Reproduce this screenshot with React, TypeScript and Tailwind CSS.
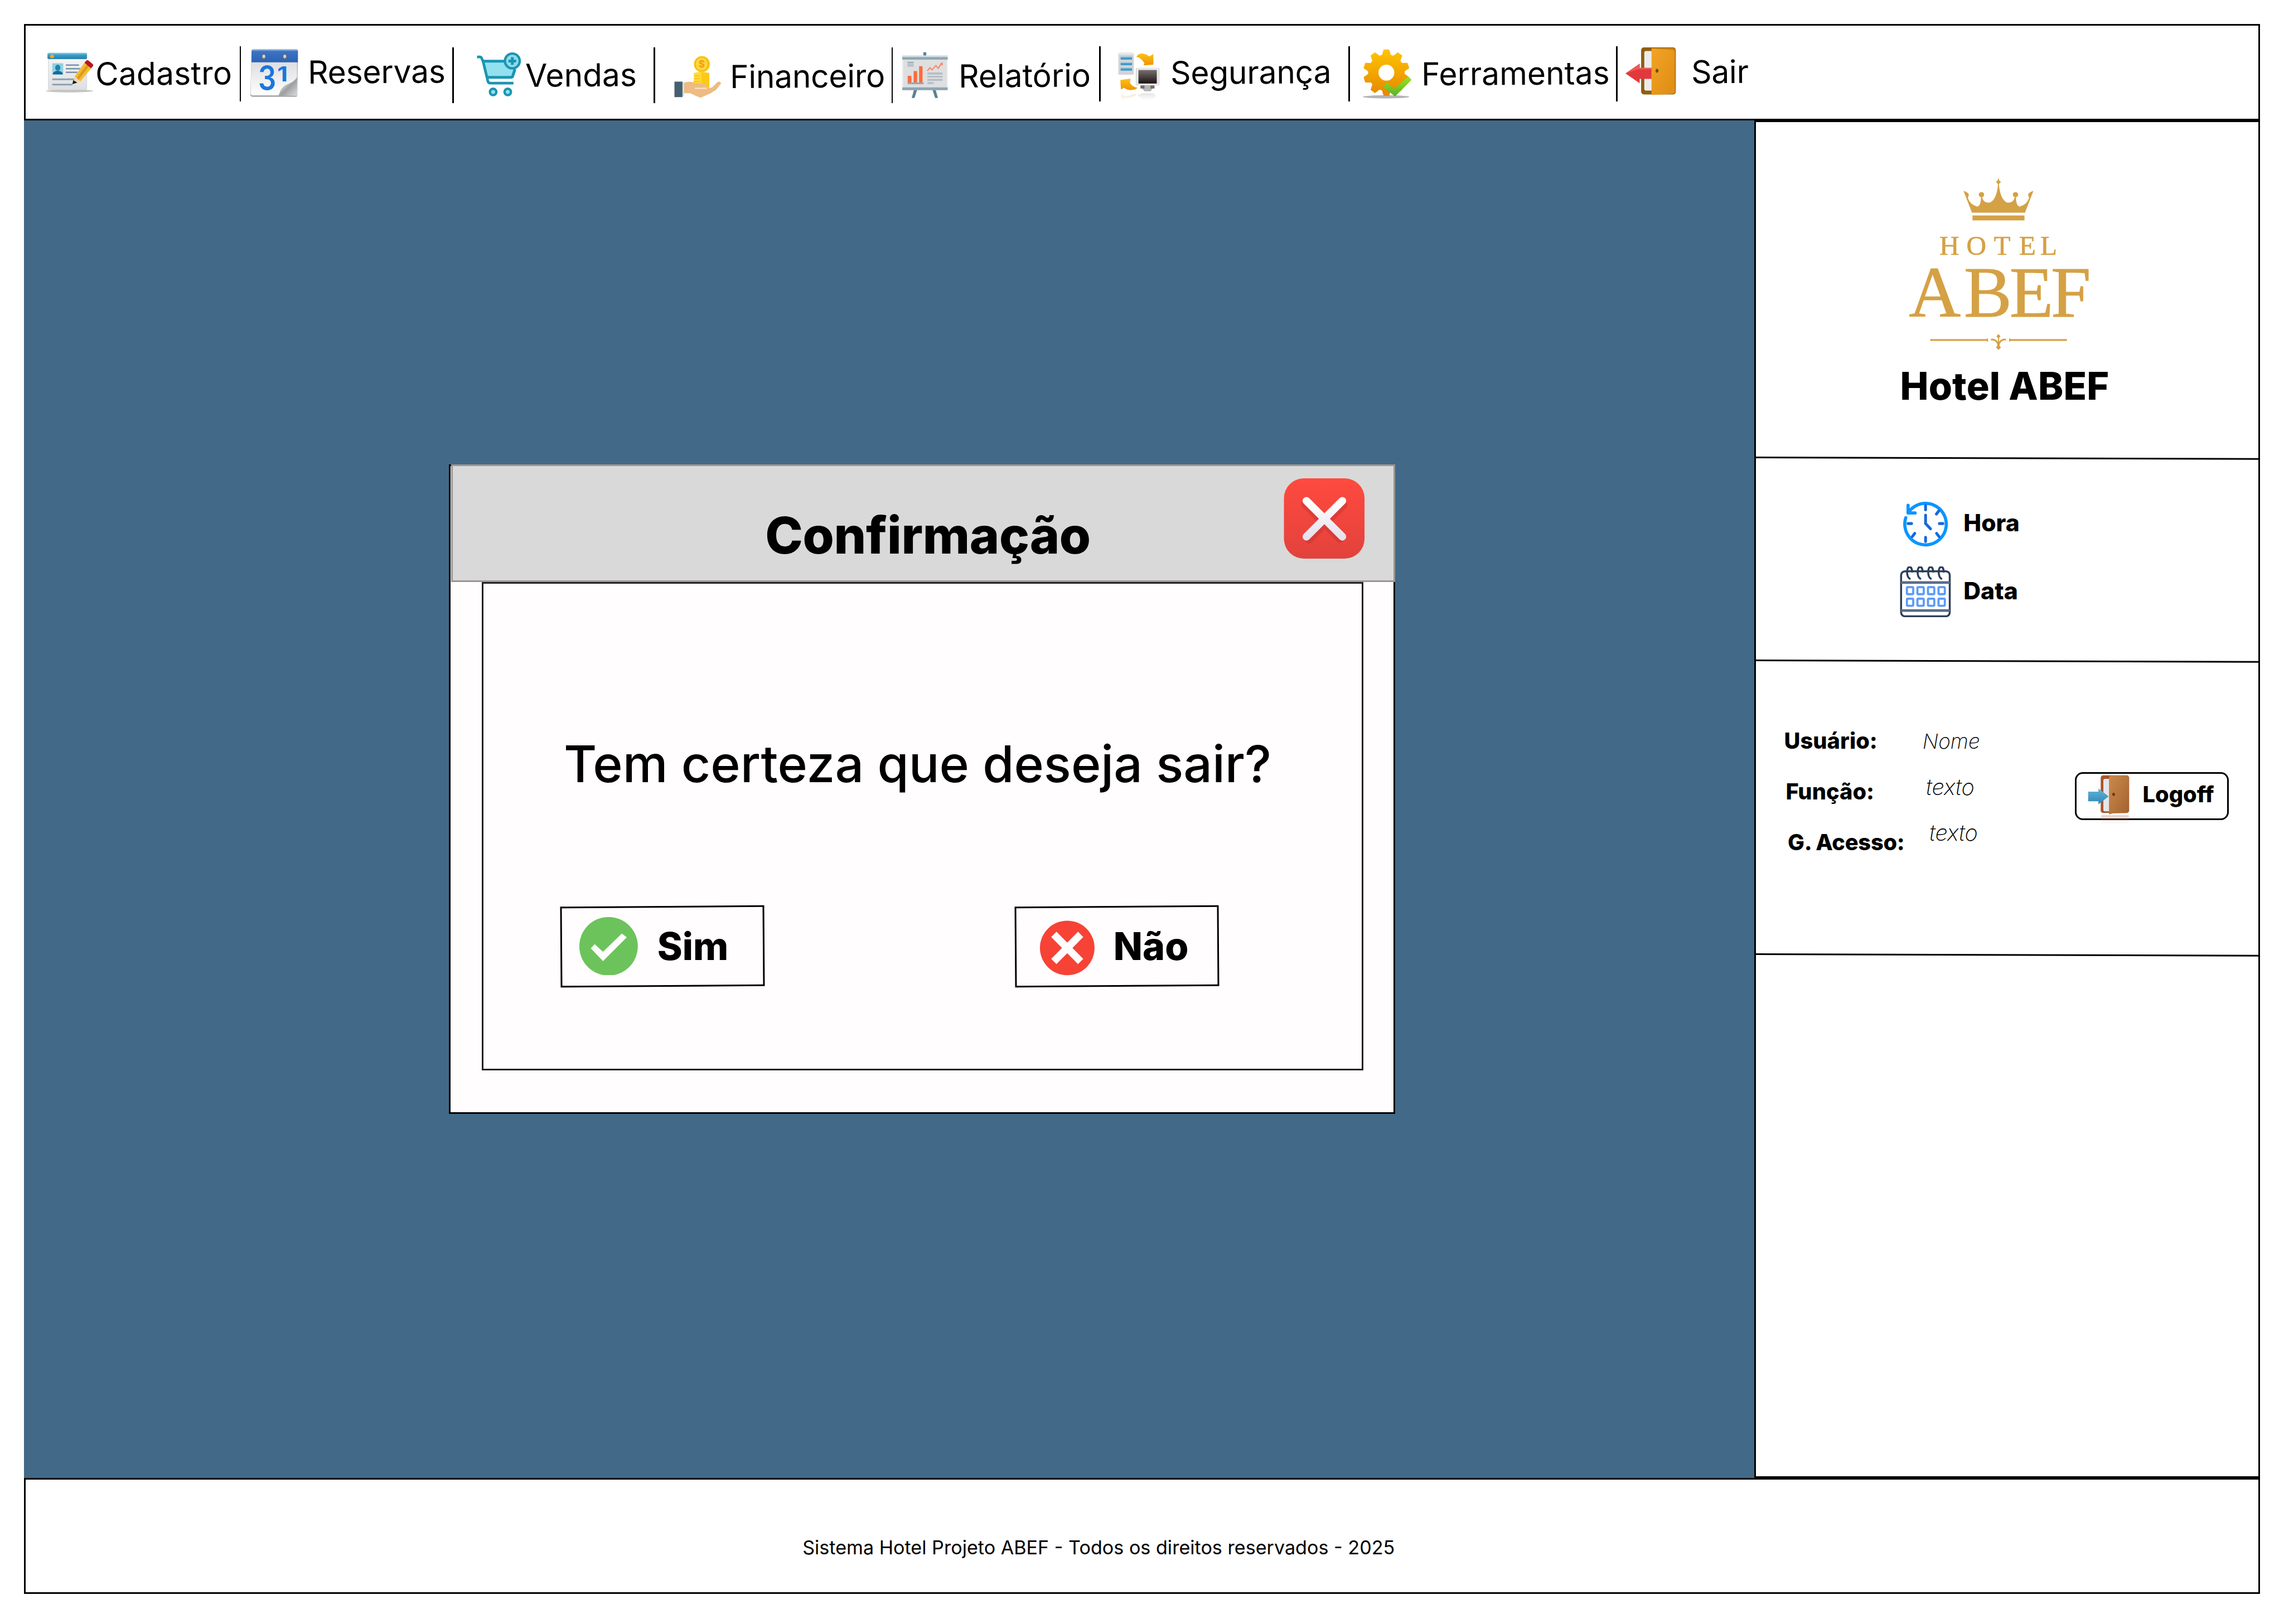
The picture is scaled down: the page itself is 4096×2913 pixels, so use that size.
import type { ReactNode } from "react";

type IconProps = { className: string };

function CadastroIcon({ className }: IconProps) {
  return (
    <svg className={className} viewBox="104 205 167 235" preserveAspectRatio="none">
      <defs>
        <linearGradient id="cad-bar" x1="0" y1="0" x2="0" y2="1">
          <stop offset="0" stopColor="#8fd6ee" />
          <stop offset=".35" stopColor="#3e9cc4" />
          <stop offset="1" stopColor="#2580ad" />
        </linearGradient>
        <linearGradient id="cad-page" x1="0" y1="0" x2="0" y2="1">
          <stop offset="0" stopColor="#f7f7f7" />
          <stop offset="1" stopColor="#dedfe0" />
        </linearGradient>
      </defs>
      <ellipse cx="187" cy="427" rx="83" ry="8" fill="#c4c4c4" />
      <rect x="113" y="212" width="134" height="208" rx="5" fill="url(#cad-page)" stroke="#d4d6d8" strokeWidth="2" />
      <rect x="110" y="210" width="138" height="36" rx="7" fill="url(#cad-bar)" />
      <ellipse cx="126" cy="231" rx="7" ry="10" fill="#f2a916" />
      <rect x="127" y="270" width="38" height="64" fill="#8fd0e0" />
      <ellipse cx="146" cy="295" rx="9" ry="17" fill="#1f83ad" />
      <path d="M129 333v-8q7-12 17-12t17 12v8z" fill="#126c98" />
      <path d="M174 280h46M174 301h50M174 321h40" stroke="#7690ac" strokeWidth="8" />
      <path d="M127 361h78M127 391h70" stroke="#8ba0b4" strokeWidth="10" />
      <path d="M205 345l34-78 23 32-37 74z" fill="#f4bb35" />
      <path d="M212 353l35-75 7 10-36 76z" fill="#e09a1c" />
      <path d="M239 267l7-13q4-3 8 2l14 19q3 5 1 10l-7 14z" fill="#b8161b" />
      <path d="M205 345l20 28-27 16z" fill="#f1d6ae" />
      <path d="M200 366l14 14-17 9z" fill="#1c1c1c" />
    </svg>
  );
}

function ReservasIcon({ className }: IconProps) {
  return (
    <svg className={className} viewBox="816 184 170 278" preserveAspectRatio="none">
      <defs>
        <linearGradient id="res-top" x1="0" y1="0" x2="0" y2="1">
          <stop offset="0" stopColor="#c9daf0" />
          <stop offset=".18" stopColor="#3b74c4" />
          <stop offset="1" stopColor="#2d62b4" />
        </linearGradient>
        <linearGradient id="res-page" x1="0" y1="0" x2="0" y2="1">
          <stop offset="0" stopColor="#d2d3d6" />
          <stop offset=".4" stopColor="#e4e4e7" />
          <stop offset="1" stopColor="#ffffff" />
        </linearGradient>
        <linearGradient id="res-curl" x1="0" y1="0" x2="1" y2="1">
          <stop offset="0.2" stopColor="#fafafa" />
          <stop offset=".55" stopColor="#9c9ea0" />
          <stop offset="1" stopColor="#dcdddf" />
        </linearGradient>
      </defs>
      <path d="M822 196l-4 250q0 12 8 12h150q6 0 6-10l2-250z" fill="#a6a8ab" />
      <path d="M822 196l-3 244q1 10 8 10h150l4-12V196z" fill="url(#res-page)" />
      <path d="M822 262v-64q0-12 8-12h146q8 0 8 12v64z" fill="url(#res-top)" />
      <ellipse cx="864" cy="231" rx="8" ry="16" fill="#5f6b7c" />
      <ellipse cx="865" cy="229" rx="5" ry="10" fill="#d7d2c6" />
      <ellipse cx="938" cy="231" rx="8" ry="16" fill="#5f6b7c" />
      <ellipse cx="938" cy="229" rx="5" ry="10" fill="#d7d2c6" />
      <text transform="translate(845 417) scale(.53 1)" fontFamily="Inter, sans-serif" fontWeight="600" fontSize="186" fill="#1b76dc">3</text>
      <text transform="translate(912 370) scale(.72 1)" fontFamily="Inter, sans-serif" fontWeight="700" fontSize="118" fill="#1b76dc">1</text>
      <path d="M981 345q-8 25-30 40-26 14-32 55l-4 12h66z" fill="url(#res-curl)" />
    </svg>
  );
}

function VendasIcon({ className }: IconProps) {
  return (
    <svg className={className} viewBox="0 0 254 257" fill="none">
      <path d="M38 53h118l56 52-10 38H63z" fill="#93e0ef" />
      <path d="M9 29h8q8 0 11 8l8 18 27 112q3 11 14 11h124" stroke="#1a95b2" strokeWidth="15" strokeLinecap="square" />
      <path d="M36 53h122M56 145h137q10 0 12-9l12-38" stroke="#1a95b2" strokeWidth="16" />
      <circle cx="202" cy="52" r="42" fill="#8edcec" stroke="#1a95b2" strokeWidth="14" />
      <path d="M202 30v44M180 52h44" stroke="#1a95b2" strokeWidth="16" />
      <circle cx="93" cy="228" r="18" fill="#93e0ef" stroke="#1a95b2" strokeWidth="14" />
      <circle cx="176" cy="228" r="18" fill="#93e0ef" stroke="#1a95b2" strokeWidth="14" />
    </svg>
  );
}

function FinanceiroIcon({ className }: IconProps) {
  return (
    <svg className={className} viewBox="784 130 164 250" preserveAspectRatio="none">
      <path d="M853 234q26-10 54 0v84h-50l-6-30q6-26 2-54z" fill="#fdc916" />
      <path d="M853 234q12-6 26-6v64h-26z" fill="#ffdc3a" />
      <path d="M853 250h22M853 266h22M853 282h22" stroke="#f6b414" strokeWidth="4" />
      <ellipse cx="881" cy="184" rx="28" ry="46" fill="#fdc513" />
      <ellipse cx="880" cy="184" rx="22" ry="37" fill="#ffd93e" stroke="#f7b519" strokeWidth="3" />
      <text transform="translate(880 204) scale(.62 1)" textAnchor="middle" fontFamily="Inter, sans-serif" fontWeight="700" fontSize="56" fill="#f39a12">$</text>
      <path d="M818 290Q838 276 856 290Q870 298 884 292Q897 294 898 314L908 320Q914 320 920 310L936 284Q946 280 948 294L930 330L912 348Q896 362 876 374Q860 366 842 350L818 348Z" fill="#eebb82" />
      <path d="M856 321h42" stroke="#fbe3c4" strokeWidth="7" />
      <path d="M812 286h7v78h-7z" fill="#cfe0ea" />
      <path d="M785 283h28v88h-28z" fill="#46606f" />
    </svg>
  );
}

function RelatorioIcon({ className }: IconProps) {
  return (
    <svg className={className} viewBox="44 114 166 266" preserveAspectRatio="none">
      <path d="M122 116h10v26h-10zM89 330h11l-9 46h-10zM154 330h11l8 46h-10z" fill="#5d7f93" />
      <rect x="49" y="150" width="157" height="172" fill="#dedfe1" stroke="#eff0f1" strokeWidth="4" />
      <rect x="48" y="134" width="159" height="14" fill="#cfdde3" />
      <rect x="48" y="144" width="159" height="14" fill="#8fa6b2" />
      <rect x="48" y="316" width="159" height="16" fill="#8fa6b2" />
      <path d="M66 170h22v9H66zM66 183h22v5H66zM66 192h22v5H66z" fill="#9fb0ba" />
      <path d="M67 250h13v40H67zM88 223h12v67H88zM107 196h12v94h-12z" fill="#ff6a3a" />
      <path d="M67 288h56v10H67z" fill="#94a8b4" />
      <path d="M136 222l9-18 7 12 14-24 8 16 12-30" fill="none" stroke="#f98a68" strokeWidth="5" />
      <path d="M180 182l9-10 1 22z" fill="#f98a68" />
      <path d="M136 231h53v12h-53zM136 250h53v10h-53zM136 268h53v11h-53zM136 286h22v11h-22z" fill="#b4bfc6" />
    </svg>
  );
}

function SegurancaIcon({ className }: IconProps) {
  return (
    <svg className={className} viewBox="800 114 148 292" preserveAspectRatio="none">
      <defs>
        <linearGradient id="seg-arrow" x1="0" y1="0" x2="0" y2="1">
          <stop offset="0" stopColor="#ffc014" />
          <stop offset="1" stopColor="#ec9406" />
        </linearGradient>
        <linearGradient id="seg-screen" x1="0" y1="0" x2="0" y2="1">
          <stop offset="0" stopColor="#777070" />
          <stop offset="1" stopColor="#1d1212" />
        </linearGradient>
        <linearGradient id="seg-fade" x1="0" y1="0" x2="0" y2="1">
          <stop offset="0" stopColor="#f0cf8c" stopOpacity=".6" />
          <stop offset="1" stopColor="#eeeeee" stopOpacity="0" />
        </linearGradient>
        <linearGradient id="seg-fade-gray" x1="0" y1="0" x2="0" y2="1">
          <stop offset="0" stopColor="#cfcfcf" stopOpacity=".6" />
          <stop offset="1" stopColor="#eeeeee" stopOpacity="0" />
        </linearGradient>
      </defs>
      <path d="M803 120q28-6 54 0v122q-27 6-54 0z" fill="#d3d4d6" />
      <path d="M803 120q28-6 54 0v10h-54z" fill="#e9e9ea" />
      <path d="M811 142h40v16h-40zM811 174h40v16h-40zM811 205h40v16h-40z" fill="#3f9ccb" />
      <path d="M811 142h40v4h-40zM811 174h40v4h-40zM811 205h40v4h-40z" fill="#8cc6e2" />
      <path d="M866 142Q874 118 893 125Q904 130 911 140L925 126V187L891 191L894 178Q886 160 878 150Z" fill="url(#seg-arrow)" />
      <rect x="865" y="206" width="80" height="98" rx="5" fill="#ebebeb" stroke="#c9c9c9" strokeWidth="2" />
      <rect x="873" y="217" width="64" height="77" fill="url(#seg-screen)" />
      <path d="M882 304h46l-6 18-6 16h-22l-8-16z" fill="#b5b5b5" />
      <path d="M880 306h14v16h-14zM915 306h14v16h-14z" fill="#6c6c6c" />
      <path d="M810 274L846 266L843 288Q850 312 870 318Q862 332 842 331Q830 328 823 318L812 328Z" fill="url(#seg-arrow)" />
      <path d="M812 398l2-40 14 8q20-4 38-16-4 22-20 24l-18 8z" fill="url(#seg-fade)" />
      <path d="M868 360l18-10h38l10 12-6 18-14 16h-16l-14-16z" fill="url(#seg-fade-gray)" />
    </svg>
  );
}

const gearPath = (() => {
  const pts: string[] = [];
  for (let i = 0; i < 10; i++) {
    for (const [da, r] of [[-13, 101], [-6, 129], [6, 129], [13, 101]]) {
      const a = ((i * 36 + da - 90) * Math.PI) / 180;
      pts.push(`${(140 + r * Math.cos(a)).toFixed(1)} ${(137 + r * Math.sin(a)).toFixed(1)}`);
    }
  }
  return `M${pts.join("L")}ZM188 137a48 48 0 1 0 -96 0a48 48 0 1 0 96 0Z`;
})();

function FerramentasIcon({ className }: IconProps) {
  return (
    <svg className={className} viewBox="0 0 286 286">
      <defs>
        <linearGradient id="fer-gear" x1="0" y1="0" x2="0" y2="1">
          <stop offset="0" stopColor="#ffc400" />
          <stop offset="1" stopColor="#e58700" />
        </linearGradient>
        <linearGradient id="fer-check" x1="0" y1="0" x2="0" y2="1">
          <stop offset="0" stopColor="#9be31f" />
          <stop offset="1" stopColor="#5bb02a" />
        </linearGradient>
      </defs>
      <ellipse cx="138" cy="274" rx="132" ry="9" fill="#b4b4b4" />
      <path d={gearPath} fillRule="evenodd" fill="url(#fer-gear)" stroke="url(#fer-gear)" strokeWidth="6" strokeLinejoin="round" />
      <path d="M121 218l24-25 36 36 83-70 19 19-94 94z" fill="url(#fer-check)" />
    </svg>
  );
}

function SairIcon({ className }: IconProps) {
  return (
    <svg className={className} viewBox="1046 86 178 276" preserveAspectRatio="none">
      <defs>
        <linearGradient id="sair-door" x1="0" y1="0" x2="1" y2="1">
          <stop offset="0" stopColor="#f2a424" />
          <stop offset="1" stopColor="#de8c14" />
        </linearGradient>
      </defs>
      <rect x="1102" y="89" width="120" height="267" rx="10" ry="16" fill="#8f5e10" />
      <rect x="1113" y="110" width="32" height="224" rx="6" ry="10" fill="#ececec" />
      <path d="M1138 95l70-2q13 2 13 16v226q0 14-10 18l-73 6z" fill="url(#sair-door)" />
      <path d="M1138 95l70 8q9 4 9 14v222l4-4V109q0-14-13-16z" fill="#b97a18" opacity=".7" />
      <ellipse cx="1157" cy="222" rx="5" ry="11" fill="#6b4a12" />
      <path d="M1048 237l49-55v23h41v63h-41v24z" fill="#e2393d" />
      <path d="M1048 237l49-55v23h41v8h-48z" fill="#ee5a56" />
    </svg>
  );
}

function HotelLogo({ className }: IconProps) {
  return (
    <svg className={className} viewBox="150 70 1030 1000" fill="#d5a145">
      <path d="M461 153Q478 158 489 168Q494 182 485 192Q497 232 540 243Q561 234 560 190H567Q574 222 609 220Q648 206 657 118H662Q671 206 710 220Q745 222 752 190H759Q758 234 779 243Q822 232 834 192Q825 182 830 168Q841 158 858 153L810 277H509Z" />
      <circle cx="563" cy="175" r="15" />
      <circle cx="756" cy="175" r="15" />
      <path d="M659.500 78Q662 98 675 103Q662 108 659.500 128Q657 108 644 103Q657 98 659.500 78Z" />
      <rect x="512" y="293" width="295" height="28" />
      <text x="324 478 633 776 897" y="516" fontFamily="'Liberation Serif', serif" fontSize="156" stroke="#d5a145" strokeWidth="2">HOTEL</text>
      <text x="151 463 722 957" y="868" fontFamily="'Liberation Serif', serif" fontSize="408" stroke="#d5a145" strokeWidth="3">ABEF</text>
      <path d="M272 995h318l10-6v22l-10-6H272zM1048 995H730l-10-6v22l10-6h318z" />
      <path d="M659.500 966l11 13-8 10v22q14-22 40-18v10q-18-4-28 8-10 10-9 20l8 12-14 13-14-13 8-12q1-10-9-20-10-12-28-8v-10q26-4 40 18v-22l-8-10z" />
    </svg>
  );
}

function ClockIcon({ className }: IconProps) {
  return (
    <svg className={className} viewBox="0 0 257 258" fill="none" strokeLinecap="round" strokeLinejoin="round">
      <path d="M15 97A118 118 0 1 0 29 68" stroke="#0a95ff" strokeWidth="18" />
      <path d="M28 26v44h40" stroke="#0a95ff" strokeWidth="18" />
      <path
        d="M127.500 28v24M127.500 208v24M28 130h20M206 130h20M203 58l-14 18M190 186l14 18M66 186l-14 18M127.500 82v48l28 30"
        stroke="#1668dc"
        strokeWidth="16"
      />
    </svg>
  );
}

function CalendarIcon({ className }: IconProps) {
  return (
    <svg className={className} viewBox="0 0 291 289" fill="none">
      <rect x="7" y="28" width="277" height="256" rx="22" stroke="#2c3d57" strokeWidth="11" />
      <path d="M6 92h279M6 251h279" stroke="#5b6b88" strokeWidth="15" />
      {[56, 116, 176, 236].map((x) => (
        <g key={x}>
          <path d={`M${x + 14} 30C${x + 12} -6 ${x - 14} -6 ${x - 15} 30C${x - 15} 52 ${x - 9} 64 ${x} 70`} stroke="#2c3d57" strokeWidth="11" strokeLinecap="round" />
          <rect x={x - 16} y="118" width="36" height="40" rx="5" stroke="#5c9bf6" strokeWidth="12" />
          <rect x={x - 16} y="184" width="36" height="40" rx="5" stroke="#5c9bf6" strokeWidth="12" />
        </g>
      ))}
    </svg>
  );
}

function LogoffIcon({ className }: IconProps) {
  return (
    <svg className={className} viewBox="1020 378 130 285" preserveAspectRatio="none">
      <defs>
        <linearGradient id="log-door" x1="0" y1="0" x2="1" y2="1">
          <stop offset="0" stopColor="#c98a4c" />
          <stop offset="1" stopColor="#a3622e" />
        </linearGradient>
        <linearGradient id="log-arrow" x1="0" y1="0" x2="0" y2="1">
          <stop offset="0" stopColor="#62b5da" />
          <stop offset="1" stopColor="#2f86b4" />
        </linearGradient>
        <linearGradient id="log-fade" x1="0" y1="0" x2="0" y2="1">
          <stop offset="0" stopColor="#c0714a" stopOpacity=".35" />
          <stop offset="1" stopColor="#e8c0b0" stopOpacity="0" />
        </linearGradient>
      </defs>
      <rect x="1061" y="380" width="86" height="214" rx="8" ry="14" fill="#a9542a" />
      <rect x="1069" y="400" width="22" height="184" rx="4" ry="8" fill="#e3e6ea" />
      <path d="M1086 392q2-10 8-10h44q8 2 8 14v184q0 12-8 14l-40 2-12 6z" fill="url(#log-door)" />
      <ellipse cx="1100" cy="488" rx="4" ry="9" fill="#6c3413" />
      <path d="M1023 473h31v-18l31 45-31 45v-18h-31z" fill="url(#log-arrow)" />
      <path d="M1062 606h84v54h-84z" fill="url(#log-fade)" />
    </svg>
  );
}

function CloseIcon({ className }: IconProps) {
  return (
    <svg className={className} viewBox="0 0 52 52">
      <defs>
        <linearGradient id="close-bg" x1="0" y1="0" x2="0" y2="1">
          <stop offset="0" stopColor="#ff4a3f" />
          <stop offset="1" stopColor="#e2423c" />
        </linearGradient>
        <linearGradient id="close-x" x1="0" y1="0" x2="0" y2="1">
          <stop offset="0" stopColor="#ffffff" />
          <stop offset="1" stopColor="#e6e1ee" />
        </linearGradient>
      </defs>
      <rect x=".8" y=".7" width="50.800" height="50.600" rx="12.500" fill="url(#close-bg)" />
      <g fill="none" strokeLinecap="round">
        <path d="M14 17l22 22M38.500 17.500l-22 22" stroke="#b92c2b" strokeWidth="4.800" opacity=".35" />
        <path d="M15 14.900l22.600 22.600M37.600 14.900L15 37.500" stroke="url(#close-x)" strokeWidth="4.900" />
      </g>
    </svg>
  );
}

function CheckBadge({ className }: IconProps) {
  return (
    <svg className={className} viewBox="0 0 331 331">
      <circle cx="165.500" cy="165.500" r="166" fill="#6cc35b" />
      <path d="M65 177l22-24 47 44L241 93l28 22L134 250z" fill="#fff" />
    </svg>
  );
}

function CrossBadge({ className }: IconProps) {
  return (
    <svg className={className} viewBox="0 0 316 312">
      <circle cx="158" cy="156" r="155" fill="#f64336" />
      <path d="M82 79l152 154M234 79L82 233" stroke="#fff" strokeWidth="42" />
    </svg>
  );
}

function MenuLabel({ className, children }: { className: string; children: ReactNode }) {
  return <span className={`${className} block shrink-0 -rotate-[0.4deg] text-xl leading-6 whitespace-nowrap`}>{children}</span>;
}

function Divider({ className }: IconProps) {
  return <span className={`${className} h-[35px] w-px shrink-0 bg-black`} />;
}

function DialogButton({ className, children }: { className: string; children: ReactNode }) {
  return (
    <button className={`${className} relative flex h-[51px] w-[128.8px] shrink-0 items-start text-2xl leading-[29px] font-extrabold`}>
      <span className="absolute inset-0 -rotate-[0.4deg] border-[1.06px] border-black" />
      {children}
    </button>
  );
}

export default function App() {
  return (
    <div className="h-[1024px] w-[1440px] overflow-hidden bg-white p-[15px] font-[Inter,sans-serif] text-black [zoom:2.84444]">
      <header className="h-[61px] w-[1410px] border-[1.06px] border-black">
        <nav className="flex items-start">
          <CadastroIcon className="mt-[16.8px] ml-[12.8px] h-[26.1px] w-[30.2px] shrink-0" />
          <MenuLabel className="mt-[18.5px] ml-px w-[91px] tracking-[0.08px]">Cadastro</MenuLabel>
          <Divider className="mt-[13px]" />
          <ReservasIcon className="mt-[14.4px] ml-[5.4px] h-[30.9px] w-[30.7px] shrink-0" />
          <MenuLabel className="mt-[17.3px] ml-[5.9px] w-[91px] tracking-[-0.06px]">Reservas</MenuLabel>
          <Divider className="mt-[14px]" />
          <VendasIcon className="mt-[16.8px] ml-[14.7px] h-[28.5px] w-[28.2px] shrink-0" />
          <MenuLabel className="mt-[19.3px] ml-[2.3px] w-[80.8px]">Vendas</MenuLabel>
          <Divider className="mt-[14px]" />
          <FinanceiroIcon className="mt-[18.4px] ml-[12px] h-[27.8px] w-[29.6px] shrink-0" />
          <MenuLabel className="mt-[20.3px] ml-[5.5px] w-[101.9px] tracking-[-0.09px]">Financeiro</MenuLabel>
          <Divider className="mt-[14px]" />
          <RelatorioIcon className="mt-[16.7px] ml-[5px] h-[29.5px] w-[29.9px] shrink-0" />
          <MenuLabel className="mt-[19.8px] ml-[6.3px] w-[88.8px]">Relatório</MenuLabel>
          <Divider className="mt-[13px]" />
          <SegurancaIcon className="mt-[16.7px] ml-[10.5px] h-[32.4px] w-[26.8px] shrink-0" />
          <MenuLabel className="mt-[17.6px] ml-[6.6px] w-[112.1px] tracking-[-0.07px]">Segurança</MenuLabel>
          <Divider className="mt-[13px]" />
          <FerramentasIcon className="mt-[14.7px] ml-[7.6px] h-[31.8px] w-[31.8px] shrink-0" />
          <MenuLabel className="mt-[18.4px] ml-[5.6px] w-[123px]">Ferramentas</MenuLabel>
          <Divider className="mt-[13px]" />
          <SairIcon className="mt-[13.6px] ml-[4.6px] h-[30.7px] w-[32.5px] shrink-0" />
          <MenuLabel className="mt-[17.3px] ml-[9.1px] w-[40px] tracking-[-0.08px]">Sair</MenuLabel>
        </nav>
      </header>

      <div className="flex h-[856px]">
        <main className="w-[1091px] bg-[#426988]">
          <section className="mt-[217px] ml-[268px] h-[409.3px] w-[596.7px] border-[1.06px] border-black bg-[#fffdfe]">
            <div className="-mt-[1.06px] -mr-[1.06px] ml-[0.4px] flex h-[74.2px] items-start border-[1.06px] border-[#9c9792] bg-[#d9d9d9]">
              <h1 className="mt-[24.2px] ml-[196.9px] w-[326.1px] text-[32px] leading-[39px] font-extrabold tracking-[-0.12px]">Confirmação</h1>
              <button className="mt-[6.9px]">
                <CloseIcon className="h-[52px] w-[52.2px]" />
              </button>
            </div>
            <div className="ml-[19.6px] h-[307.7px] w-[556px] border-[1.06px] border-[#232222]">
              <p className="mt-[93.9px] ml-[50.7px] text-[32px] leading-[39px] font-medium whitespace-nowrap">Tem certeza que deseja sair?</p>
              <div className="mt-[70.3px] flex items-start">
                <DialogButton className="ml-[48.7px]">
                  <CheckBadge className="mt-[6.8px] ml-[12px] size-[36.8px] shrink-0" />
                  <span className="mt-[10.7px] ml-[12.2px]">Sim</span>
                </DialogButton>
                <DialogButton className="ml-[157.5px]">
                  <CrossBadge className="mt-[9px] ml-[15.7px] h-[34.7px] w-[35.1px] shrink-0" />
                  <span className="mt-[10.7px] ml-[11.5px]">Não</span>
                </DialogButton>
              </div>
            </div>
          </section>
        </main>

        <aside className="w-[319px] border-[1.06px] border-black bg-white">
          <section className="flex h-[211px] flex-col items-start">
            <HotelLogo className="mt-[34.1px] ml-[96.3px] h-[111.1px] w-[114.4px] shrink-0 overflow-visible" />
            <h2 className="mt-[6.6px] ml-[90.9px] text-2xl leading-[29px] font-extrabold tracking-[0.05px] whitespace-nowrap">Hotel ABEF</h2>
          </section>
          <div className="h-px origin-left rotate-[0.18deg] bg-black" />
          <section className="flex h-[127px] flex-col items-start text-[15px] leading-[18px] font-extrabold">
            <div className="mt-[26.6px] ml-[92.7px] flex items-start">
              <ClockIcon className="h-[28.7px] w-[28.5px] overflow-visible" />
              <span className="mt-[5.1px] ml-[9.7px]">Hora</span>
            </div>
            <div className="mt-[12.7px] ml-[90.8px] flex items-start">
              <CalendarIcon className="h-[32px] w-[32.3px]" />
              <span className="mt-[6.5px] ml-[7.8px]">Data</span>
            </div>
          </section>
          <div className="h-px origin-left rotate-[0.18deg] bg-black" />
          <section className="flex h-[184px] items-start">
            <div className="mt-[41.7px] ml-[17.8px] flex w-[85px] flex-col gap-[15px] text-sm leading-[17px] font-extrabold whitespace-nowrap">
              <span>Usuário:</span>
              <span className="ml-px">Função:</span>
              <span className="ml-[2.3px] tracking-[-0.1px]">G. Acesso:</span>
            </div>
            <div className="mt-[42.500px] ml-[2.3px] flex w-[60px] flex-col text-sm leading-[17px] font-extralight italic">
              <span className="text-[13px] leading-4">Nome</span>
              <span className="mt-[12.4px] ml-[2.2px]">texto</span>
              <span className="mt-[11.9px] ml-[4.3px]">texto</span>
            </div>
            <button className="mt-[70px] ml-[35.9px] flex h-[30px] w-[97px] items-start rounded-[5px] border-[1.06px] border-black">
              <LogoffIcon className="mt-[0.7px] ml-[6.8px] h-[31.7px] w-[27.1px] shrink-0" />
              <span className="mt-[4.6px] ml-[7.9px] text-sm leading-[17px] font-extrabold">Logoff</span>
            </button>
          </section>
          <div className="h-px origin-left rotate-[0.18deg] bg-black" />
        </aside>
      </div>

      <footer className="h-[73px] w-[1410px] border-[1.06px] border-black">
        <p className="mt-[35.4px] ml-[489.9px] text-xs leading-[15px] whitespace-nowrap">Sistema Hotel Projeto ABEF - Todos os direitos reservados - 2025</p>
      </footer>
    </div>
  );
}
